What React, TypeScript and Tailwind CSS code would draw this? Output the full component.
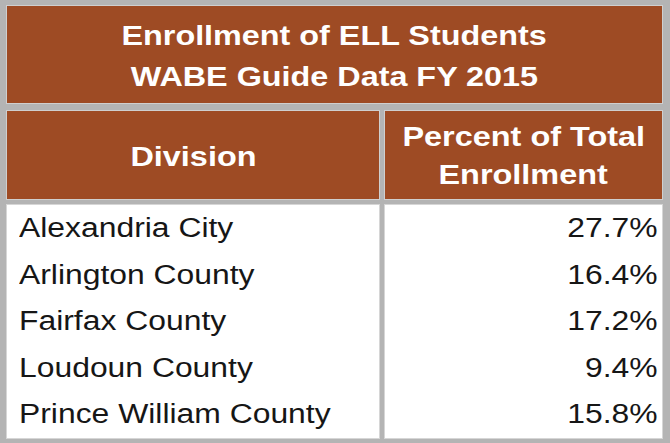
const rows = [
  { name: "Alexandria City", pct: "27.7%" },
  { name: "Arlington County", pct: "16.4%" },
  { name: "Fairfax County", pct: "17.2%" },
  { name: "Loudoun County", pct: "9.4%" },
  { name: "Prince William County", pct: "15.8%" },
]

export default function App() {
  return (
    <div
      className="w-[670px] h-[443px] overflow-hidden bg-[#b4b4b4] pl-[7px] pt-[6px] pr-[8px] pb-[9px] flex flex-col"
      style={{ fontFamily: '"Liberation Sans", Arial, sans-serif' }}
    >
      {/* Title */}
      <div className="shrink-0 h-[97px] bg-[#9e4b24] text-white font-bold text-[28px] leading-[41px] text-center pt-[9px] shadow-[0_0_0_1px_#cfcfcf]">
        <div>
          <span className="inline-block scale-x-[1.155]">Enrollment of ELL Students</span>
        </div>
        <div>
          <span className="inline-block scale-x-[1.155]">WABE Guide Data FY 2015</span>
        </div>
      </div>

      {/* Header */}
      <div className="shrink-0 mt-[8px] h-[88px] grid grid-cols-[372px_277px] gap-x-[6px]">
        <div className="bg-[#9e4b24] text-white font-bold text-[28px] flex items-center justify-center pt-[4px] shadow-[0_0_0_1px_#cfcfcf]">
          <span className="inline-block scale-x-[1.157]">Division</span>
        </div>
        <div className="bg-[#9e4b24] text-white font-bold text-[28px] leading-[38px] flex flex-col items-center justify-center pt-[2px] shadow-[0_0_0_1px_#cfcfcf]">
          <span className="inline-block scale-x-[1.158]">Percent of Total</span>
          <span className="inline-block scale-x-[1.158]">Enrollment</span>
        </div>
      </div>

      {/* Body */}
      <div className="shrink-0 mt-[6px] h-[229px] grid grid-cols-[372px_277px] gap-x-[6px]">
        <div className="bg-white text-[#161616] text-[27px] leading-[46.5px] pl-[12px] shadow-[0_0_0_1px_#d6d6d6]">
          {rows.map((r) => (
            <div key={r.name}>
              <span className="inline-block origin-left scale-x-[1.18]">{r.name}</span>
            </div>
          ))}
        </div>
        <div className="bg-white text-[#161616] text-[27px] leading-[46.5px] pr-[4px] text-right shadow-[0_0_0_1px_#d6d6d6]">
          {rows.map((r) => (
            <div key={r.name}>
              <span className="inline-block origin-right scale-x-[1.18]">{r.pct}</span>
            </div>
          ))}
        </div>
      </div>
    </div>
  )
}
